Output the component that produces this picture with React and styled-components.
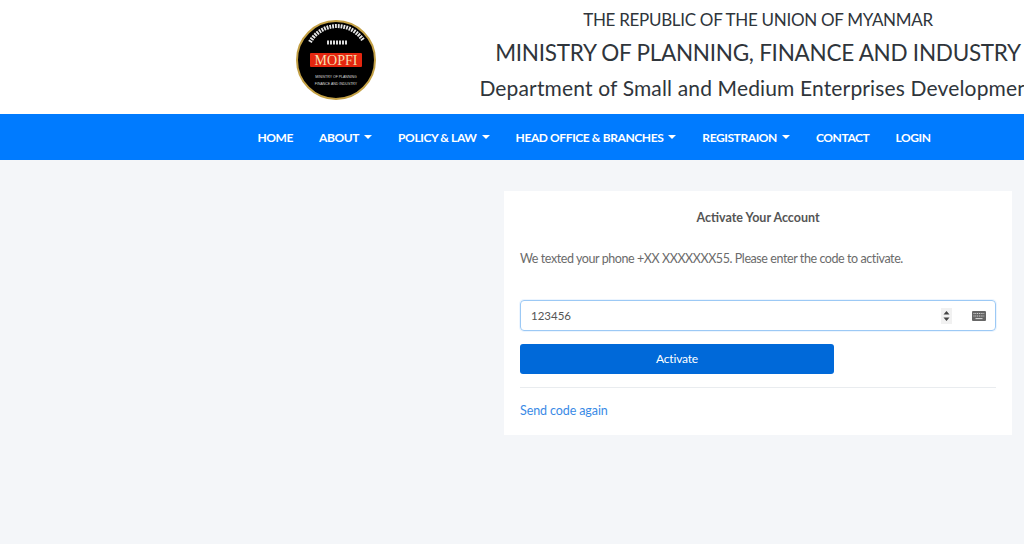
import React from "react";
import styled, { createGlobalStyle } from "styled-components";

const Global = createGlobalStyle`
  html, body { margin: 0; padding: 0; background: #f4f6f9; overflow: hidden; }
  body { font-family: Lato, "Noto Sans", sans-serif; color: #212529; }
`;

const Page = styled.div`
  width: 1024px;
  height: 544px;
  overflow: hidden;
  background: #f4f6f9;
`;

const Header = styled.header`
  height: 114px;
  background: #fff;
  display: flex;
  align-items: center;
  overflow: hidden;
`;

const LogoCell = styled.div`
  width: 296px;
  margin-left: 188px;
  padding-top: 6px;
  display: flex;
  justify-content: center;
  flex: none;
`;

const Titles = styled.div`
  flex: none;
  width: 560px;
  margin-left: -6px;
  margin-top: -5px;
  display: flex;
  flex-direction: column;
  align-items: center;
  white-space: nowrap;
  color: #2f353b;
`;

const TitleLine = styled.div`
  font-size: ${(p) => p.$size}px;
  line-height: ${(p) => p.$line}px;
  letter-spacing: ${(p) => p.$track || 0}px;
`;

const Nav = styled.nav`
  height: 46px;
  background: #007bff;
  display: flex;
  align-items: center;
  justify-content: center;
  padding-left: 164px;
`;

const NavItem = styled.a`
  padding: 0 13px;
  color: #fff;
  font-size: 12px;
  letter-spacing: -0.4px;
  font-weight: 700;
  white-space: nowrap;
  display: flex;
  align-items: center;
`;

const Caret = styled.span`
  margin-left: 5px;
  width: 0;
  height: 0;
  border-top: 4px solid #fff;
  border-left: 4px solid transparent;
  border-right: 4px solid transparent;
`;

const Main = styled.main`
  display: flex;
  justify-content: flex-end;
  padding: 31px 12px 0 0;
`;

const Card = styled.section`
  width: 508px;
  height: 244px;
  box-sizing: border-box;
  background: #fff;
  padding: 0 16px;
  display: flex;
  flex-direction: column;
`;

const CardTitle = styled.h2`
  margin: 18px 0 0;
  font-size: 12.5px;
  line-height: 17px;
  font-weight: 700;
  text-align: center;
  color: #555;
`;

const Message = styled.p`
  margin: 24px 0 0;
  font-size: 12.5px;
  letter-spacing: -0.42px;
  line-height: 17px;
  color: #6b6b6b;
`;

const Field = styled.div`
  margin-top: 33px;
  height: 31px;
  box-sizing: border-box;
  border: 1px solid #9cc9f5;
  border-radius: 4px;
  box-shadow: 0 0 0 1px rgba(128, 189, 255, 0.15);
  display: flex;
  align-items: center;
  padding: 0 9px 0 10px;
`;

const CodeInput = styled.input`
  flex: 1;
  min-width: 0;
  border: 0;
  outline: 0;
  padding: 0;
  font: 11.5px Lato, sans-serif;
  color: #555;
  background: transparent;
`;

const Spinner = styled.svg`
  width: 11px;
  height: 16px;
  margin-right: 20px;
  background: #f1f1f1;
`;

const Keyboard = styled.svg`
  width: 14px;
  height: 10px;
`;

const ActivateButton = styled.button`
  margin-top: 13px;
  width: 314px;
  height: 30px;
  border: 0;
  border-radius: 3px;
  background: #0069d9;
  color: #fff;
  font: 12px Lato, sans-serif;
  letter-spacing: -0.2px;
  padding: 0 0 2px;
`;

const Divider = styled.hr`
  margin: 13px 0 0;
  border: 0;
  border-top: 1px solid #e9ecef;
  width: 100%;
`;

const SendAgain = styled.a`
  margin-top: 14px;
  font-size: 12.5px;
  letter-spacing: -0.1px;
  line-height: 18px;
  color: #3a8ae6;
`;

function Logo() {
  return (
    <svg width="80" height="80" viewBox="0 0 80 80">
      <circle cx="40" cy="40" r="39" fill="#000" stroke="#c3a045" strokeWidth="2" />
      <path d="M14 22 A31 31 0 0 1 67 20" fill="none" stroke="#e8e8e8" strokeWidth="4" strokeDasharray="1.8 1" />
      <path d="M31 22.5h20" stroke="#ddd" strokeWidth="4" strokeDasharray="2 1" />
      <rect x="14" y="33" width="52" height="14" rx="1" fill="#e4260f" />
      <text x="40" y="45" textAnchor="middle" fontFamily="Liberation Serif" fontSize="14" fill="#f6dfb0">MOPFI</text>
      <text x="40" y="58" textAnchor="middle" fontFamily="Liberation Sans" fontSize="3.5" fill="#ddd">MINISTRY OF PLANNING</text>
      <text x="40" y="65" textAnchor="middle" fontFamily="Liberation Sans" fontSize="3.5" fill="#ddd">FINANCE AND INDUSTRY</text>
    </svg>
  );
}

const items = [
  ["HOME", false],
  ["ABOUT", true],
  ["POLICY & LAW", true],
  ["HEAD OFFICE & BRANCHES", true],
  ["REGISTRAION", true],
  ["CONTACT", false],
  ["LOGIN", false],
];

export default function App() {
  return (
    <Page>
      <Global />
      <Header>
        <LogoCell>
          <Logo />
        </LogoCell>
        <Titles>
          <TitleLine $size={17} $line={28} $track={-0.3}>THE REPUBLIC OF THE UNION OF MYANMAR</TitleLine>
          <TitleLine $size={22.5} $line={37} $track={-0.27}>MINISTRY OF PLANNING, FINANCE AND INDUSTRY</TitleLine>
          <TitleLine $size={21} $line={33} $track={0.15}>Department of Small and Medium Enterprises Development</TitleLine>
        </Titles>
      </Header>
      <Nav>
        {items.map(([label, caret]) => (
          <NavItem key={label}>
            {label}
            {caret && <Caret />}
          </NavItem>
        ))}
      </Nav>
      <Main>
        <Card>
          <CardTitle>Activate Your Account</CardTitle>
          <Message>We texted your phone +XX XXXXXXX55. Please enter the code to activate.</Message>
          <Field>
            <CodeInput readOnly value="123456" />
            <Spinner viewBox="0 0 11 16">
              <path d="M5.5 3l3 3.5h-6zM5.5 13l3-3.5h-6z" fill="#444" />
            </Spinner>
            <Keyboard viewBox="0 0 14 10">
              <rect width="14" height="10" rx="1" fill="#666" />
              <path d="M1.5 2.5h11M1.5 5h11" stroke="#ddd" strokeWidth="1" strokeDasharray="1 .8" />
              <path d="M3.5 7.6h7" stroke="#ddd" strokeWidth="1" />
            </Keyboard>
          </Field>
          <ActivateButton>Activate</ActivateButton>
          <Divider />
          <SendAgain>Send code again</SendAgain>
        </Card>
      </Main>
    </Page>
  );
}
